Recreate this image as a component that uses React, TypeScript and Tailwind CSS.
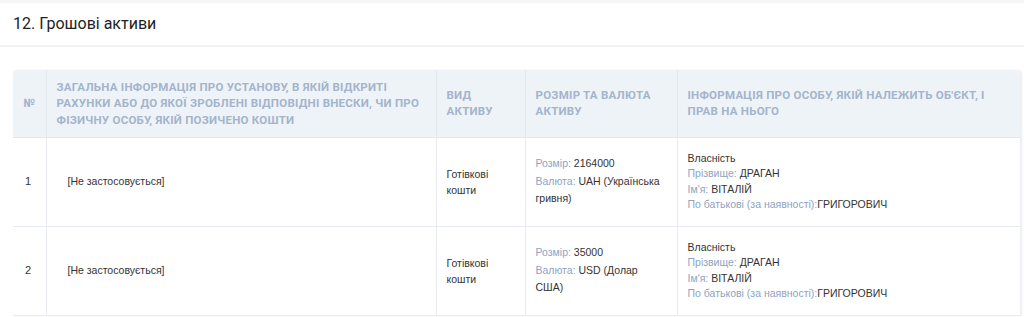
import React from "react";

const rows = [
  { n: "1", size: "2164000", cur: "UAH (Українська гривня)" },
  { n: "2", size: "35000", cur: "USD (Долар США)" },
];

export default function App() {
  return (
    <div className="w-[1024px] h-[317px] overflow-hidden bg-white" style={{ fontFamily: "Roboto, 'Liberation Sans', sans-serif" }}>
      <div className="h-[3px] bg-[#f4f5f7]" />
      <div className="h-[44px] flex items-center pl-[13px] border-b-2 border-[#eff1f4] text-[16px] text-[#222]">
        12. Грошові активи
      </div>
      <div className="pt-[23px] pl-[13px] pr-[3px]">
        <div className="rounded-t-[4px] overflow-hidden shadow-[1px_0_2px_rgba(0,0,0,0.08)] border-r border-[#eceff3]">
          <table className="w-full table-fixed border-collapse text-[10.5px] text-[#333] font-['Liberation_Sans',Arial,sans-serif]">
            <colgroup>
              <col className="w-[33px]" />
              <col className="w-[390px]" />
              <col className="w-[89px]" />
              <col className="w-[152px]" />
              <col />
            </colgroup>
            <thead>
              <tr className="bg-[#eef3f8] h-[67px] text-[#a3b4cc] font-bold uppercase text-[11.5px] leading-[16.5px] tracking-[0.25px] text-left font-['Roboto',sans-serif]">
                <th className="px-[10px] text-center font-bold border-b border-[#e3e8ee]">№</th>
                <th className="pl-[10px] pr-[6px] font-bold border-l border-b border-[#e3e8ee]">
                  Загальна інформація про установу, в якій відкриті рахунки або до якої зроблені відповідні внески, чи про фізичну особу, якій позичено кошти
                </th>
                <th className="px-[10px] font-bold border-l border-b border-[#e3e8ee]">Вид активу</th>
                <th className="px-[10px] font-bold border-l border-b border-[#e3e8ee]">Розмір та валюта активу</th>
                <th className="px-[10px] font-bold border-l border-b border-[#e3e8ee]">Інформація про особу, якій належить об'єкт, і прав на нього</th>
              </tr>
            </thead>
            <tbody>
              {rows.map((r) => (
                <tr key={r.n} className="h-[89px] border-b border-[#e8ecf0]">
                  <td className="px-[12px] align-middle text-[11px]">{r.n}</td>
                  <td className="pl-[21px] pr-[10px] border-l border-[#e8ecf0] align-middle">[Не застосовується]</td>
                  <td className="px-[10px] border-l border-[#e8ecf0] align-middle leading-[16px]">
                    Готівкові кошти
                  </td>
                  <td className="px-[10px] border-l border-[#e8ecf0] align-middle leading-[17.5px]">
                    <div>
                      <span className="text-[#8fa3bf]">Розмір: </span>
                      {r.size}
                    </div>
                    <div>
                      <span className="text-[#8fa3bf]">Валюта: </span>
                      {r.cur}
                    </div>
                  </td>
                  <td className="px-[10px] border-l border-[#e8ecf0] align-middle leading-[15.5px]">
                    <div>Власність</div>
                    <div>
                      <span className="text-[#8fa3bf]">Прізвище: </span>ДРАГАН
                    </div>
                    <div>
                      <span className="text-[#8fa3bf]">Ім'я: </span>ВІТАЛІЙ
                    </div>
                    <div>
                      <span className="text-[#8fa3bf]">По батькові (за наявності):</span>ГРИГОРОВИЧ
                    </div>
                  </td>
                </tr>
              ))}
            </tbody>
          </table>
        </div>
      </div>
    </div>
  );
}
